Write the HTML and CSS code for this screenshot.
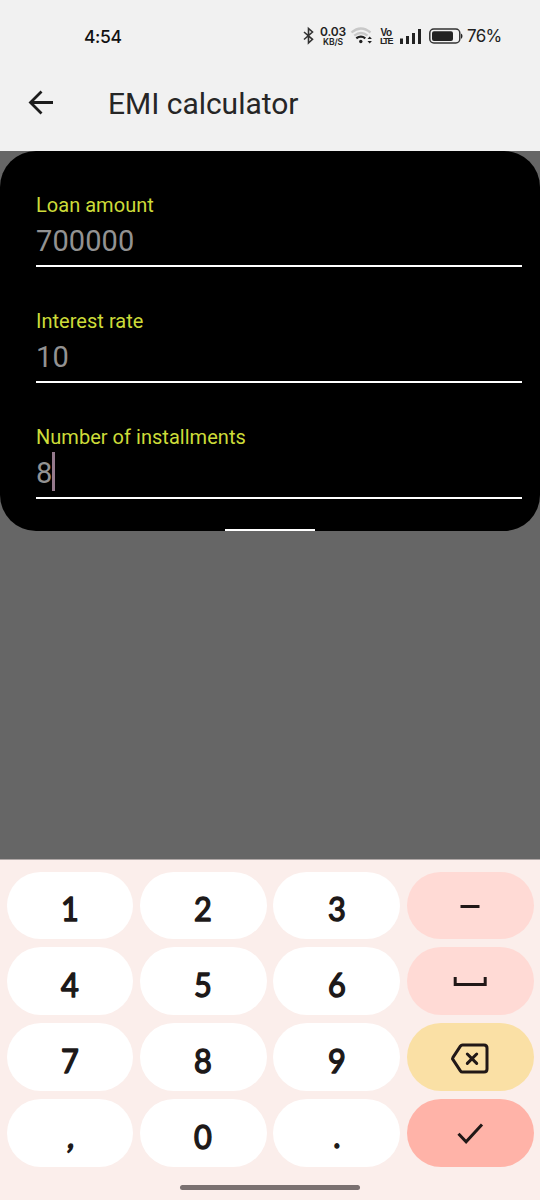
FILE: index.html
```html
<!DOCTYPE html>
<html lang="en">
<head>
<meta charset="utf-8">
<title>EMI calculator</title>
<link rel="stylesheet" href="styles.css">
</head>
<body>
<div class="screen">
  <header class="top">
    <div class="status">
      <span class="clock">4:54</span>
      <div class="indicators">
        <svg class="bluetooth" width="12" height="18" viewBox="0 0 12 18"><path d="M1 5L9.500 12.300 5.500 16V1.500L9.500 5 1 12.500"/></svg>
        <span class="speed"><b>0.03</b><small>KB/S</small></span>
        <svg class="wifi" width="24" height="18" viewBox="0 0 24 18"><path class="faint" d="M.5 5.500Q9.800 -2.500 19.500 5.500M3.300 8.600Q10 3.300 16.500 8.600"/><path class="strong" d="M5.300 11.300Q10 8 14.300 11.300"/><circle cx="9.800" cy="14.500" r="1.700"/><path d="M16.500 12l2.200-2.600 2.200 2.600zM16.500 14l2.200 2.600 2.200-2.600z"/></svg>
        <span class="volte"><b>Vo</b><b>LTE</b></span>
        <svg class="signal" width="22" height="16" viewBox="0 0 22 16"><path d="M1.500 16v-5.500M7.500 16V8M13.500 16V5M19.500 16V1"/></svg>
        <svg class="battery" width="34" height="16" viewBox="0 0 34 16"><rect class="shell" x=".8" y="1" width="30" height="14" rx="4"/><rect x="3" y="3.200" width="21" height="9.800" rx="2"/><path d="M32 5.500q1.500 .5 1.500 2.500T32 11z"/></svg>
        <span class="percent">76%</span>
      </div>
    </div>
    <div class="appbar">
      <svg class="back" width="26" height="26" viewBox="0 0 26 26"><path d="M25 12.500H3M13.500 1.500L2.500 12.500l11 11"/></svg>
      <h1 class="title">EMI calculator</h1>
    </div>
  </header>
  <main class="content">
    <form class="panel">
      <div class="field"><label class="label">Loan amount</label><div class="value">700000</div></div>
      <div class="field"><label class="label">Interest rate</label><div class="value">10</div></div>
      <div class="field"><label class="label">Number of installments</label><div class="value">8<i class="caret"></i></div></div>
      <div class="handle"></div>
    </form>
  </main>
  <section class="keyboard">
    <div class="keys">
      <div class="key"><svg class="digit" viewBox="0 0 40 40"><text x="20" y="36">1</text></svg></div>
      <div class="key"><svg class="digit" viewBox="0 0 40 40"><text x="20" y="36">2</text></svg></div>
      <div class="key"><svg class="digit" viewBox="0 0 40 40"><text x="20" y="36">3</text></svg></div>
      <div class="key soft"><svg class="sign" width="40" height="40" viewBox="0 0 40 40"><path d="M10.500 21.500h19"/></svg></div>
      <div class="key"><svg class="digit" viewBox="0 0 40 40"><text x="20" y="36">4</text></svg></div>
      <div class="key"><svg class="digit" viewBox="0 0 40 40"><text x="20" y="36">5</text></svg></div>
      <div class="key"><svg class="digit" viewBox="0 0 40 40"><text x="20" y="36">6</text></svg></div>
      <div class="key soft"><svg class="sign" width="40" height="40" viewBox="0 0 40 40"><path d="M5.200 16v7.500h30v-7.500"/></svg></div>
      <div class="key"><svg class="digit" viewBox="0 0 40 40"><text x="20" y="36">7</text></svg></div>
      <div class="key"><svg class="digit" viewBox="0 0 40 40"><text x="20" y="36">8</text></svg></div>
      <div class="key"><svg class="digit" viewBox="0 0 40 40"><text x="20" y="36">9</text></svg></div>
      <div class="key erase"><svg class="sign round" width="40" height="40" viewBox="0 0 40 40"><path d="M12.500 8H34q3 0 3 3v21q0 3-3 3H12.500q-1.300 0-2.100-1.200L3 22.700q-.8-1.200 0-2.400l7.400-11.100q.8-1.200 2.100-1.200zM17.300 17l9.400 9.400M26.700 17L17.300 26.400"/></svg></div>
      <div class="key"><svg class="digit comma" viewBox="0 0 40 40"><text x="20" y="35">,</text></svg></div>
      <div class="key"><svg class="digit" viewBox="0 0 40 40"><text x="20" y="36">0</text></svg></div>
      <div class="key"><svg class="digit" viewBox="0 0 40 40"><text x="20" y="35.500">.</text></svg></div>
      <div class="key enter"><svg class="sign" width="40" height="40" viewBox="0 0 40 40"><path d="M8.500 20.800l7.600 8L32 11.500"/></svg></div>
    </div>
    <div class="homebar"></div>
  </section>
</div>
</body>
</html>
```
FILE: styles.css
```css
* { box-sizing: border-box; }
body { margin: 0; font-family: Roboto, sans-serif; }
svg { display: block; overflow: visible; flex: none; }
.screen { width: 540px; height: 1200px; display: flex; flex-direction: column; background: #666; }
.top { height: 151px; background: #f1f1f1; }
.status { height: 72px; display: flex; align-items: center; justify-content: space-between; padding: 0 39px 0 84px; font-family: Inter, sans-serif; color: #222; }
.clock { font-size: 17.5px; font-weight: 500; color: #111; letter-spacing: -.4px; }
.indicators { display: flex; align-items: center; }
.bluetooth { fill: none; stroke: #333; stroke-width: 1.6; margin-right: 5px; }
.speed { width: 26px; height: 21px; display: flex; flex-direction: column; align-items: center; font-size: 12px; margin-right: 5px; letter-spacing: -.2px; }
.speed b { font-weight: 600; line-height: 11px; }
.speed small { font-size: 8.5px; line-height: 10px; font-weight: 600; letter-spacing: -.1px; }
.wifi { fill: #222; margin-right: 5px; }
.wifi .faint { fill: none; stroke: #c8c8c8; stroke-width: 2.3; }
.wifi .strong { fill: none; stroke: #222; stroke-width: 2.3; }
.volte { width: 12px; display: flex; flex-direction: column; align-items: center; font-family: "Liberation Sans", sans-serif; font-size: 10px; line-height: 9px; letter-spacing: -.5px; margin-right: 8px; }
.volte b:last-child { font-size: 9px; line-height: 8px; letter-spacing: -1.4px; }
.signal { stroke: #222; stroke-width: 3; margin-right: 7px; }
.battery { fill: #222; margin-right: 4px; }
.battery .shell { fill: none; stroke: #333; stroke-width: 1.5; }
.percent { width: 34px; font-size: 17px; letter-spacing: -.7px; white-space: nowrap; }
.appbar { height: 63px; display: flex; align-items: center; padding-left: 28px; }
.back { fill: none; stroke: #1c1c1c; stroke-width: 2.8; margin: 0 54px 2px 0; }
.title { margin: 0; font-size: 30px; font-weight: 400; color: #262626; line-height: 36px; letter-spacing: -.03px; }
.content { flex: 1; }
.panel { position: relative; height: 380px; border-radius: 36px; background: #000; padding: 41px 18px 0 36px; }
.field { height: 75px; margin-bottom: 41px; border-bottom: 2px solid #fff; }
.label { display: block; font-size: 20px; line-height: 26px; color: #cddc39; letter-spacing: .03px; }
.value { display: flex; align-items: center; height: 46px; font-size: 29px; font-weight: 400; color: #929292; letter-spacing: .1px; }
.caret { width: 3px; height: 39px; margin-bottom: 4px; background: #94798c; }
.handle { position: absolute; left: 225px; bottom: 0; width: 90px; height: 2px; background: #fff; }
.keyboard { height: 341px; border-top: 1px solid #b0a8a7; background: #fbeeeb; padding: 11.5px 6.5px 0; }
.keys { display: grid; grid-template-columns: repeat(4, 1fr); grid-auto-rows: 67.3px; gap: 8.7px 6.7px; }
.key { display: flex; align-items: center; justify-content: center; border-radius: 36px; background: #fff; }
.soft { background: #ffdad5; }
.erase { background: #fae0a5; }
.enter { background: #ffb3a8; }
.digit { width: 40px; height: 40px; transform: scaleX(.93); }
.digit text { font: 400 33px Lato, sans-serif; text-anchor: middle; fill: #1d1919; stroke: #1d1919; stroke-width: 1.5px; stroke-linejoin: round; }
.comma { transform: skewX(-8deg); transform-origin: 50% 90%; }
.sign { fill: none; stroke: #211817; stroke-width: 3; }
.round { stroke-linecap: round; stroke-linejoin: round; }
.homebar { width: 180px; height: 5px; margin: 18px auto 0; border-radius: 3px; background: #7a7070; }
```
